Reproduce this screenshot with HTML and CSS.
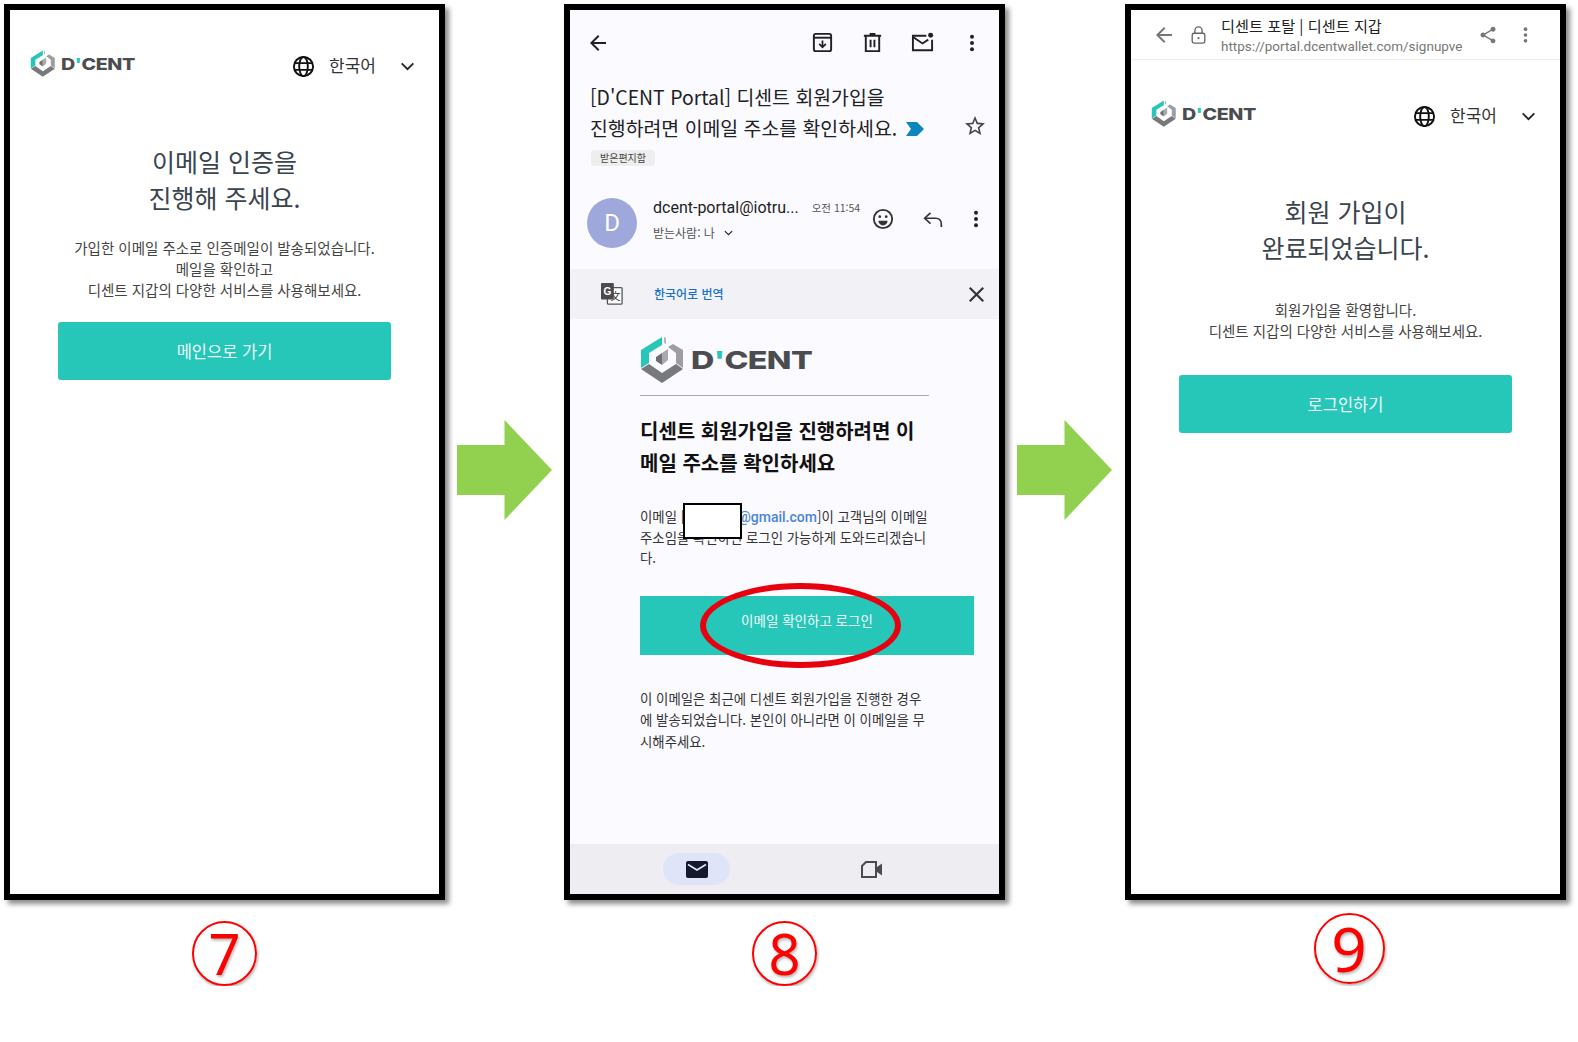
FILE: index.html
```html
<!DOCTYPE html>
<html lang="ko">
<head>
  <meta charset="UTF-8">
  <title>디센트 회원가입 안내</title>
  <link rel="stylesheet" href="styles.css">
</head>
<body>
  <svg class="sprite" aria-hidden="true">
    <symbol id="logo-mark" viewBox="0 0 43 49">
      <polygon fill="#26c6b9" points="22,1 1,14 1,32 9,27 9,17 22,9"/>
      <polygon fill="#b5b7ba" points="24,1 26,2 26,8 24,7"/>
      <polygon fill="#9c9ea1" points="28,11 33,8 43,14 43,32 36,27 36,17"/>
      <polygon fill="#77797c" points="1,33 22,47 43,33 36,28 22,37 9,28"/>
      <polygon fill="#6d6f72" points="16,21 22,17 22,29 16,25"/>
      <polygon fill="#a8aaad" points="22,17 28,13 28,24 22,29"/>
    </symbol>
    <symbol id="globe" viewBox="0 0 24 24">
      <g fill="none" stroke="#111" stroke-width="2">
        <circle cx="12" cy="12" r="10"/>
        <ellipse cx="12" cy="12" rx="4.5" ry="10"/>
        <path d="M2.5 8.5h19M2.5 15.5h19"/>
      </g>
    </symbol>
    <symbol id="chevron" viewBox="0 0 16 10">
      <polyline points="1.5,1.5 8,8 14.5,1.5" fill="none" stroke="#222" stroke-width="2"/>
    </symbol>
    <symbol id="back" viewBox="0 0 24 24">
      <path d="M20 11H7.83l5.59-5.59L12 4l-8 8 8 8 1.41-1.41L7.83 13H20v-2z"/>
    </symbol>
    <symbol id="dots" viewBox="0 0 6 20">
      <circle cx="3" cy="3" r="2.2"/><circle cx="3" cy="10" r="2.2"/><circle cx="3" cy="17" r="2.2"/>
    </symbol>
  </svg>

  <main class="board">
    <section class="step">
      <div class="phone">
        <header class="site-head">
          <div class="brand">
            <svg class="brand-mark"><use href="#logo-mark"/></svg>
            <span class="brand-name">D<span class="tick">'</span>CENT</span>
          </div>
          <div class="lang">
            <svg class="lang-globe"><use href="#globe"/></svg>
            <span class="lang-name">한국어</span>
            <svg class="lang-chevron"><use href="#chevron"/></svg>
          </div>
        </header>
        <h2 class="site-title">이메일 인증을<br>진행해 주세요.</h2>
        <p class="site-text">가입한 이메일 주소로 인증메일이 발송되었습니다.<br>메일을 확인하고<br>디센트 지갑의 다양한 서비스를 사용해보세요.</p>
        <div class="site-btn">메인으로 가기</div>
      </div>
      <div class="num">7</div>
    </section>

    <div class="arrow">
      <svg width="95" height="100" viewBox="0 0 96 100" preserveAspectRatio="none"><polygon fill="#92d050" points="0,25 48,25 48,0 96,50 48,100 48,75 0,75"/></svg>
    </div>

    <section class="step">
      <div class="phone phone-mail">
        <div class="mail-bar">
          <svg class="ico-back" viewBox="0 0 24 24"><use href="#back"/></svg>
          <div class="mail-actions">
            <svg class="ico" viewBox="0 0 24 24" fill="none" stroke="#202124" stroke-width="2"><rect x="3" y="3" width="18" height="18" rx="2"/><path d="M3 7h18"/><path d="M12 10v7M8.5 13.5L12 17l3.5-3.5" stroke-width="1.8"/></svg>
            <svg class="ico" viewBox="0 0 24 24" fill="none" stroke="#202124" stroke-width="2"><path d="M5 6v15h14V6M3 5h18M9 3h6"/><path d="M10 9v8M14 9v8"/></svg>
            <svg class="ico" viewBox="0 0 24 24" fill="none" stroke="#202124" stroke-width="2"><path d="M16 5H2v15h20V9"/><path d="M2.5 6.5L12 13l6-4"/><circle cx="20.5" cy="4.5" r="2.6" fill="#202124" stroke="none"/></svg>
            <svg class="ico-dots ico-dots-bar" viewBox="0 0 6 20"><use href="#dots"/></svg>
          </div>
        </div>
        <div class="subject">
          <h1 class="subject-text">[D'CENT Portal] 디센트 회원가입을<br>진행하려면 이메일 주소를 확인하세요.<svg class="marker" viewBox="0 0 18 14"><polygon fill="#0b87bd" points="0,0 11,0 18,7 11,14 0,14 5,7"/></svg></h1>
          <svg class="star" viewBox="0 0 24 24"><path fill="#444" d="M22 9.24l-7.19-.62L12 2 9.19 8.63 2 9.24l5.46 4.73L5.82 21 12 17.27 18.18 21l-1.63-7.03L22 9.24zM12 15.4l-3.76 2.27 1-4.28-3.32-2.88 4.38-.38L12 6.1l1.71 4.04 4.38.38-3.32 2.88 1 4.28L12 15.4z"/></svg>
        </div>
        <span class="tag">받은편지함</span>
        <div class="sender">
          <div class="avatar">D</div>
          <div class="sender-info">
            <div class="sender-line"><span class="sender-name">dcent-portal@iotru...</span><span class="sender-time">오전 11:54</span></div>
            <div class="sender-to">받는사람: 나<svg class="to-chevron"><use href="#chevron"/></svg></div>
          </div>
          <svg class="ico-face" viewBox="0 0 24 24" fill="none" stroke="#333" stroke-width="2"><circle cx="12" cy="12" r="10"/><circle cx="8.5" cy="9.5" r="1.5" fill="#333" stroke="none"/><circle cx="15.5" cy="9.5" r="1.5" fill="#333" stroke="none"/><path d="M7 14h10a5 5 0 0 1-10 0z" fill="#333" stroke="none"/></svg>
          <svg class="ico-reply" viewBox="0 0 24 20" fill="none" stroke="#333" stroke-width="2"><path d="M9 2L2 8.5 9 15"/><path d="M2.5 8.5H15c4 0 7 2.5 7 7V19"/></svg>
          <svg class="ico-dots ico-dots-row" viewBox="0 0 6 20"><use href="#dots"/></svg>
        </div>
        <div class="translate">
          <svg class="ico-translate" viewBox="0 0 24 24">
            <rect x="7" y="5" width="16" height="18" rx="1" fill="#fff" stroke="#555" stroke-width="1.4"/>
            <text x="16" y="19" font-size="11" text-anchor="middle" fill="#333" font-family="Noto Sans CJK KR, sans-serif">文</text>
            <rect x="0" y="0" width="14" height="18" rx="1" fill="#4a4a4f"/>
            <text x="7" y="13" font-size="11" font-weight="700" text-anchor="middle" fill="#fff" font-family="Liberation Sans, sans-serif">G</text>
          </svg>
          <span class="translate-link">한국어로 번역</span>
          <svg class="ico-close" viewBox="5 5 14 14"><path fill="#333" d="M19 6.41L17.59 5 12 10.59 6.41 5 5 6.41 10.59 12 5 17.59 6.41 19 12 13.41 17.59 19 19 17.59 13.41 12z"/></svg>
        </div>
        <div class="mail-body">
          <div class="mail-brand">
            <svg class="mail-mark"><use href="#logo-mark"/></svg>
            <span class="mail-brand-name">D<span class="tick">'</span>CENT</span>
          </div>
          <div class="mail-rule"></div>
          <h3 class="mail-title">디센트 회원가입을 진행하려면 이<br>메일 주소를 확인하세요</h3>
          <p class="mail-text">이메일 [<span class="masked"></span><a class="mail-link">@gmail.com</a>]이 고객님의 이메일<br>주소임을 확인하면 로그인 가능하게 도와드리겠습니<br>다.<span class="mask-box"></span></p>
          <div class="mail-btn">이메일 확인하고 로그인<span class="ring"></span></div>
          <p class="mail-note">이 이메일은 최근에 디센트 회원가입을 진행한 경우<br>에 발송되었습니다. 본인이 아니라면 이 이메일을 무<br>시해주세요.</p>
        </div>
        <nav class="mail-nav">
          <div class="nav-item"><span class="nav-pill"><svg class="ico-mail" viewBox="0 0 22 17"><rect width="22" height="17" rx="2" fill="#14192e"/><path d="M2 3.5l9 5.5 9-5.5" fill="none" stroke="#e6e8f5" stroke-width="1.6"/></svg></span></div>
          <div class="nav-item"><svg class="ico-video" viewBox="0 0 22 17" fill="none" stroke="#4a4a4f" stroke-width="2"><path d="M5 1h10v15H1V5z"/><path d="M16 6l5-3.5v12L16 11z" fill="#4a4a4f" stroke="none"/></svg></div>
        </nav>
      </div>
      <div class="num">8</div>
    </section>

    <div class="arrow arrow-wide">
      <svg width="95" height="100" viewBox="0 0 96 100" preserveAspectRatio="none"><polygon fill="#92d050" points="0,25 48,25 48,0 96,50 48,100 48,75 0,75"/></svg>
    </div>

    <section class="step">
      <div class="phone">
        <div class="chrome">
          <svg class="chrome-back" viewBox="0 0 24 24"><use href="#back"/></svg>
          <svg class="chrome-lock" viewBox="0 0 16 20" fill="none" stroke="#666" stroke-width="1.5"><rect x="1" y="8" width="14" height="11" rx="2"/><path d="M4 8V5a4 4 0 0 1 8 0v3"/><circle cx="8" cy="13.5" r="1.2" fill="#666" stroke="none"/></svg>
          <div class="chrome-info">
            <div class="chrome-title">디센트 포탈 | 디센트 지갑</div>
            <div class="chrome-url">https://portal.dcentwallet.com/signupve</div>
          </div>
          <svg class="chrome-share" viewBox="0 0 24 24"><path fill="#777" d="M18 16.08c-.76 0-1.44.3-1.96.77L8.91 12.7c.05-.23.09-.46.09-.7s-.04-.47-.09-.7l7.05-4.11c.54.5 1.25.81 2.04.81 1.66 0 3-1.34 3-3s-1.34-3-3-3-3 1.34-3 3c0 .24.04.47.09.7L8.04 9.81C7.5 9.31 6.79 9 6 9c-1.66 0-3 1.34-3 3s1.34 3 3 3c.79 0 1.5-.31 2.04-.81l7.12 4.16c-.05.21-.08.43-.08.65 0 1.61 1.31 2.92 2.92 2.92 1.61 0 2.92-1.31 2.92-2.92s-1.31-2.92-2.92-2.92z"/></svg>
          <svg class="chrome-dots" viewBox="0 0 6 20"><use href="#dots"/></svg>
        </div>
        <header class="site-head">
          <div class="brand">
            <svg class="brand-mark"><use href="#logo-mark"/></svg>
            <span class="brand-name">D<span class="tick">'</span>CENT</span>
          </div>
          <div class="lang">
            <svg class="lang-globe"><use href="#globe"/></svg>
            <span class="lang-name">한국어</span>
            <svg class="lang-chevron"><use href="#chevron"/></svg>
          </div>
        </header>
        <h2 class="site-title">회원 가입이<br>완료되었습니다.</h2>
        <p class="site-text site-text-wide">회원가입을 환영합니다.<br>디센트 지갑의 다양한 서비스를 사용해보세요.</p>
        <div class="site-btn">로그인하기</div>
      </div>
      <div class="num num-big">9</div>
    </section>
  </main>
</body>
</html>
```

FILE: styles.css
```css
/* 기본 */
body { margin:0; background:#fff; font-family:"Noto Sans CJK KR","Noto Sans",sans-serif; color:#222; }
h1, h2, h3, p { margin:0; font-weight:400; }
svg { display:block; flex:none; }
.sprite { width:0; height:0; position:absolute; }
.board { display:flex; align-items:flex-start; padding:4px 0 0 4px; }

/* 폰 프레임 */
.step { display:flex; flex-direction:column; align-items:center; width:441px; }
.phone { width:100%; height:896px; box-sizing:border-box; border:6px solid #000; background:#fff; box-shadow:4px 4px 5px rgba(0,0,0,0.45); display:flex; flex-direction:column; overflow:hidden; }
.arrow { width:107px; padding:416px 0 0 12px; flex:none; }
.arrow-wide { width:108px; }
.num { width:61px; height:61px; margin-top:21px; border:2.5px solid #f00; border-radius:50%; color:#f00; font:56px/61px "Noto Sans",sans-serif; text-align:center; box-shadow:1px 2px 3px rgba(0,0,0,0.3); text-shadow:1px 2px 3px rgba(0,0,0,0.3); }
.num-big { width:67px; height:67px; margin:13px 0 0 7px; font-size:62px; line-height:67px; }

/* 디센트 사이트 */
.site-head { display:flex; justify-content:space-between; padding:40px 24px 0 20px; height:32px; }
.brand { display:flex; align-items:center; gap:6px; height:28px; }
.brand-mark { width:25px; height:28px; }
.brand-name { font:800 16px/28px Inter,sans-serif; color:#4a4c50; letter-spacing:-0.3px; transform:scaleX(1.23); transform-origin:left; }
.tick { color:#26c6b9; }
.lang { display:flex; align-items:center; }
.lang-globe { width:23px; height:23px; }
.lang-name { font-size:17px; line-height:24px; margin:-3px 0 0 14px; color:#333; }
.lang-chevron { width:15px; height:9px; margin-left:24px; }
.site-title { margin-top:61px; text-align:center; font-size:25px; line-height:36px; color:#3a444e; }
.site-text { margin:22px 0 21.5px; text-align:center; font-size:14.5px; line-height:21px; color:#444; }
.site-text-wide { margin:34px 0 34px; }
.site-btn { height:58px; margin:0 48px 0 48px; background:#26c6b9; border-radius:3px; color:#eefbf9; font-size:16.5px; line-height:58px; text-align:center; }

/* 크롬 커스텀 탭 */
.chrome { height:49px; flex:none; border-bottom:1px solid #eee; display:flex; align-items:center; box-sizing:content-box; }
.chrome-back { width:24px; height:24px; margin:0 0 0 21px; fill:#777; }
.chrome-lock { width:15px; height:18px; margin-left:15px; }
.chrome-info { margin:3px 0 0 15px; width:253px; white-space:nowrap; }
.chrome-title { font-size:15.2px; line-height:21px; color:#222; }
.chrome-url { font:13.5px/21px Roboto,sans-serif; color:#777; }
.chrome-share { width:20px; height:20px; margin-left:4px; }
.chrome-dots { width:5px; height:18px; margin-left:25px; fill:#777; }

/* 메일 앱 */
.phone-mail { background:#fbfaff; }
.mail-bar { height:65px; flex:none; display:flex; align-items:center; justify-content:space-between; padding:0 24px 0 16px; }
.ico-back { width:24px; height:24px; fill:#222; }
.mail-actions { display:flex; align-items:center; gap:27px; }
.ico { width:23px; height:23px; }
.ico-dots { width:6px; height:18px; fill:#202124; }
.ico-dots-bar { margin-left:8px; }
.subject { margin:7px 0 0 20px; display:flex; align-items:flex-end; width:397px; justify-content:space-between; }
.subject-text { font-size:19.4px; line-height:30.5px; color:#202124; white-space:nowrap; }
.marker { display:inline-block; width:18px; height:14px; margin-left:9px; }
.star { width:24px; height:24px; margin-bottom:5px; }
.tag { align-self:flex-start; margin:7px 0 0 21px; padding:0 9px; height:16px; background:#eeeeee; border-radius:4px; font-size:10px; line-height:16px; color:#444; }
.sender { display:flex; align-items:center; margin:32px 0 0 17px; height:50px; flex:none; }
.avatar { width:50px; height:50px; border-radius:50%; background:#9fa8da; color:#fff; font:24px/50px Roboto,sans-serif; text-align:center; flex:none; }
.sender-info { margin:-6px 0 0 16px; width:219px; }
.sender-line { display:flex; align-items:center; gap:13px; }
.sender-name { font:400 16px/20px Roboto,sans-serif; color:#222; white-space:nowrap; }
.sender-time { font-size:10.5px; line-height:20px; color:#555; white-space:nowrap; }
.sender-to { display:flex; align-items:center; font-size:12px; line-height:20px; color:#555; margin-top:5px; }
.to-chevron { width:9px; height:6px; margin-left:9px; }
.ico-face { width:22px; height:22px; margin-top:-8px; }
.ico-reply { width:20px; height:17px; margin:-8px 0 0 29px; }
.ico-dots-row { margin:-8px 0 0 30px; }
.translate { height:50px; flex:none; margin-top:21px; background:#f2f2f6; display:flex; align-items:center; padding-left:31px; }
.ico-translate { width:22px; height:22px; }
.translate-link { margin:-2px 0 0 31px; font-size:12px; font-weight:500; color:#1a73c8; }
.ico-close { width:15px; height:15px; margin-left:245px; }

/* 메일 본문 */
.mail-body { flex:1; padding:17px 0 0 70px; position:relative; }
.mail-brand { display:flex; align-items:center; height:49px; gap:8px; }
.mail-mark { width:43px; height:49px; }
.mail-brand-name { font:800 25px/49px Inter,sans-serif; color:#4a4c50; letter-spacing:-0.5px; transform:scaleX(1.29); transform-origin:left; }
.mail-rule { width:289px; height:1px; background:#aaa; margin-top:10px; }
.mail-title { margin-top:19px; font-size:20px; font-weight:700; line-height:32px; color:#111; white-space:nowrap; }
.mail-text { position:relative; margin-top:27px; font-size:13.4px; line-height:20.5px; color:#333; white-space:nowrap; }
.masked { display:inline-block; width:53px; height:1px; }
.mail-link { color:#4a86d8; font-weight:500; font-family:Roboto,sans-serif; font-size:14px; line-height:1; }
.mask-box { position:absolute; left:43px; top:-3px; width:55px; height:32px; background:#fff; border:2px solid #000; }
.mail-btn { position:relative; margin-top:28px; width:334px; height:59px; box-sizing:border-box; padding:14px 0 0 0; background:#26c6b9; color:#eefbf9; font-size:13.5px; line-height:20px; text-align:center; }
.ring { position:absolute; left:60px; top:-13px; width:189px; height:73px; border:6px solid #e8000e; border-radius:50%; }
.mail-note { margin-top:33px; font-size:13.4px; line-height:21.5px; color:#333; white-space:nowrap; }
.mail-nav { height:50px; flex:none; background:#eeedf2; display:grid; grid-template-columns:1fr 1fr; padding:0 39px; }
.nav-item { display:flex; align-items:center; justify-content:center; }
.nav-pill { width:67px; height:32px; border-radius:16px; background:#e0e4f9; display:flex; align-items:center; justify-content:center; }
.ico-mail { width:22px; height:17px; }
.ico-video { width:22px; height:17px; }
```
